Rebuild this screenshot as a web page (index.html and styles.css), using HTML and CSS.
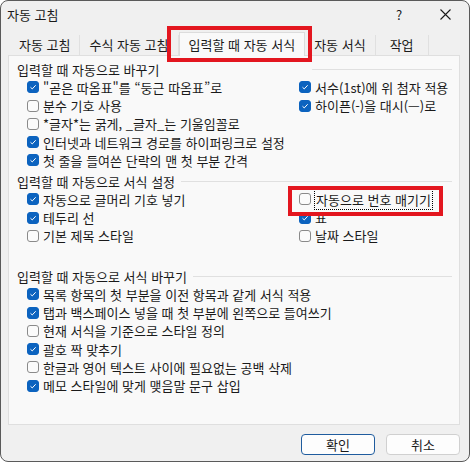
FILE: index.html
```html
<!DOCTYPE html>
<html lang="ko">
<head>
<meta charset="utf-8">
<link rel="stylesheet" href="styles.css">
</head>
<body>
<div class="window">
  <div class="titlebar">
    <span class="title">자동 고침</span>
    <span class="help">?</span>
    <span class="close"><svg width="11" height="11" viewBox="0 0 11 11"><path d="M0.5 0.5 L10.5 10.5 M10.5 0.5 L0.5 10.5" stroke="#1a1a1a" stroke-width="1.1" fill="none"/></svg></span>
  </div>
  <div class="tabs">
    <div class="tab">자동 고침</div>
    <div class="tab">수식 자동 고침</div>
    <div class="tab active">입력할 때 자동 서식</div>
    <div class="tab">자동 서식</div>
    <div class="tab last">작업</div>
  </div>
  <div class="panel">
    <div class="group g1">
      <div class="group-title"><span>입력할 때 자동으로 바꾸기</span></div>
      <div class="cols">
        <div class="col">
          <div class="row"><span class="cb on"><svg viewBox="0 0 12 12"><path d="M3 6.3 L5.1 8.3 L9.2 3.9" stroke="#fff" stroke-width="1.2" fill="none"/></svg></span><span>"곧은 따옴표"를 “둥근 따옴표”로</span></div>
          <div class="row"><span class="cb"></span><span>분수 기호 사용</span></div>
          <div class="row"><span class="cb"></span><span>*글자*는 굵게, _글자_는 기울임꼴로</span></div>
          <div class="row"><span class="cb on"><svg viewBox="0 0 12 12"><path d="M3 6.3 L5.1 8.3 L9.2 3.9" stroke="#fff" stroke-width="1.2" fill="none"/></svg></span><span>인터넷과 네트워크 경로를 하이퍼링크로 설정</span></div>
          <div class="row"><span class="cb on"><svg viewBox="0 0 12 12"><path d="M3 6.3 L5.1 8.3 L9.2 3.9" stroke="#fff" stroke-width="1.2" fill="none"/></svg></span><span>첫 줄을 들여쓴 단락의 맨 첫 부분 간격</span></div>
        </div>
        <div class="col">
          <div class="row"><span class="cb on"><svg viewBox="0 0 12 12"><path d="M3 6.3 L5.1 8.3 L9.2 3.9" stroke="#fff" stroke-width="1.2" fill="none"/></svg></span><span>서수(1st)에 위 첨자 적용</span></div>
          <div class="row"><span class="cb on"><svg viewBox="0 0 12 12"><path d="M3 6.3 L5.1 8.3 L9.2 3.9" stroke="#fff" stroke-width="1.2" fill="none"/></svg></span><span>하이픈(-)을 대시(—)로</span></div>
        </div>
      </div>
    </div>
    <div class="group g2">
      <div class="group-title"><span>입력할 때 자동으로 서식 설정</span></div>
      <div class="cols">
        <div class="col">
          <div class="row"><span class="cb on"><svg viewBox="0 0 12 12"><path d="M3 6.3 L5.1 8.3 L9.2 3.9" stroke="#fff" stroke-width="1.2" fill="none"/></svg></span><span>자동으로 글머리 기호 넣기</span></div>
          <div class="row"><span class="cb on"><svg viewBox="0 0 12 12"><path d="M3 6.3 L5.1 8.3 L9.2 3.9" stroke="#fff" stroke-width="1.2" fill="none"/></svg></span><span>테두리 선</span></div>
          <div class="row"><span class="cb"></span><span>기본 제목 스타일</span></div>
        </div>
        <div class="col">
          <div class="row"><span class="cb"></span><span class="focus">자동으로 번호 매기기</span></div>
          <div class="row"><span class="cb on"><svg viewBox="0 0 12 12"><path d="M3 6.3 L5.1 8.3 L9.2 3.9" stroke="#fff" stroke-width="1.2" fill="none"/></svg></span><span>표</span></div>
          <div class="row"><span class="cb"></span><span>날짜 스타일</span></div>
        </div>
      </div>
    </div>
    <div class="group g3">
      <div class="group-title"><span>입력할 때 자동으로 서식 바꾸기</span></div>
      <div class="col">
        <div class="row"><span class="cb on"><svg viewBox="0 0 12 12"><path d="M3 6.3 L5.1 8.3 L9.2 3.9" stroke="#fff" stroke-width="1.2" fill="none"/></svg></span><span>목록 항목의 첫 부분을 이전 항목과 같게 서식 적용</span></div>
        <div class="row"><span class="cb on"><svg viewBox="0 0 12 12"><path d="M3 6.3 L5.1 8.3 L9.2 3.9" stroke="#fff" stroke-width="1.2" fill="none"/></svg></span><span>탭과 백스페이스 넣을 때 첫 부분에 왼쪽으로 들여쓰기</span></div>
        <div class="row"><span class="cb"></span><span>현재 서식을 기준으로 스타일 정의</span></div>
        <div class="row"><span class="cb on"><svg viewBox="0 0 12 12"><path d="M3 6.3 L5.1 8.3 L9.2 3.9" stroke="#fff" stroke-width="1.2" fill="none"/></svg></span><span>괄호 짝 맞추기</span></div>
        <div class="row"><span class="cb"></span><span>한글과 영어 텍스트 사이에 필요없는 공백 삭제</span></div>
        <div class="row"><span class="cb on"><svg viewBox="0 0 12 12"><path d="M3 6.3 L5.1 8.3 L9.2 3.9" stroke="#fff" stroke-width="1.2" fill="none"/></svg></span><span>메모 스타일에 맞게 맺음말 문구 삽입</span></div>
      </div>
    </div>
  </div>
  <div class="buttons">
    <div class="btn default">확인</div>
    <div class="btn">취소</div>
  </div>
  <div class="mark mark-tab"></div>
  <div class="mark mark-num"></div>
</div>
</body>
</html>
```
FILE: styles.css
```css
* { box-sizing: border-box; }
html, body { margin: 0; padding: 0; }
body {
  width: 470px;
  height: 462px;
  background: #ffffff;
  font-family: "Noto Sans CJK KR", "Malgun Gothic", sans-serif;
  font-size: 13px;
  color: #1a1a1a;
}
.window {
  position: relative;
  width: 470px;
  height: 462px;
  border: 1px solid #5a5a5a;
  border-radius: 8px;
  background: #f0f0f0;
  padding: 0 9px 0 7px;
  display: flex;
  flex-direction: column;
  overflow: hidden;
}
.titlebar {
  height: 26px;
  display: flex;
  align-items: center;
}
.title { margin-left: -1px; }
.help {
  margin-left: auto;
  width: 20px;
  text-align: center;
  margin-right: 21px;
  font-size: 13px;
}
.close {
  width: 30px;
  height: 26px;
  display: flex;
  align-items: center;
  justify-content: center;
}
.close svg { display: block; }
.tabs {
  height: 28px;
  display: flex;
  align-items: flex-end;
  padding-left: 2px;
}
.tab {
  height: 20px;
  line-height: 20px;
  padding: 0 9px;
  min-width: 53px;
  text-align: center;
  border-right: 1px solid #e0e0e0;
  white-space: nowrap;
}
.tab.active {
  height: 24px;
  line-height: 24px;
  padding: 0 9px;
  background: #f9f9f9;
  border: 1px solid #dcdcdc;
  border-bottom: none;
  margin-bottom: -1px;
  position: relative;
  z-index: 1;
}
.panel {
  height: 370px;
  flex: none;
  background: #f9f9f9;
  border: 1px solid #dfdfdf;
  padding: 4px 7px 0 8px;
}
.group-title {
  height: 18.25px;
  display: flex;
  align-items: center;
  gap: 6px;
  white-space: nowrap;
}
.group-title::after {
  content: "";
  flex: 1;
  height: 1px;
  background: #e0e0e0;
}
.g1 .group-title::after {
  flex: none;
  width: 140px;
  margin-left: auto;
}
.g2 { margin-top: 2.5px; }
.g3 { margin-top: 22px; }
.cols {
  display: grid;
  grid-template-columns: 272px 1fr;
}
.row {
  height: 18.25px;
  display: flex;
  align-items: center;
  padding-left: 10px;
  gap: 4px;
  white-space: nowrap;
}
.cb {
  flex: none;
  width: 12px;
  height: 12px;
  border: 1px solid #8a8a8a;
  border-radius: 3px;
  background: #fbfbfb;
  display: flex;
}
.cb.on {
  background: #0c63bf;
  border-color: #0c63bf;
}
.cb svg { width: 10px; height: 10px; display: block; }
.focus {
  outline: 1px dotted #000;
  outline-offset: 0;
  padding: 0 1px;
}
.buttons {
  display: flex;
  justify-content: flex-end;
  gap: 11px;
  margin-top: 9px;
}
.btn {
  width: 74px;
  height: 21px;
  border: 1px solid #d0d0d0;
  border-radius: 4px;
  background: #fdfdfd;
  display: flex;
  align-items: center;
  justify-content: center;
}
.btn.default { border-color: #1f5c9e; }
.mark {
  position: absolute;
  border: 4px solid #e3161f;
}
.mark-tab { left: 166px; top: 25px; width: 145px; height: 36px; }
.mark-num { left: 287px; top: 185px; width: 155px; height: 30px; }
```
